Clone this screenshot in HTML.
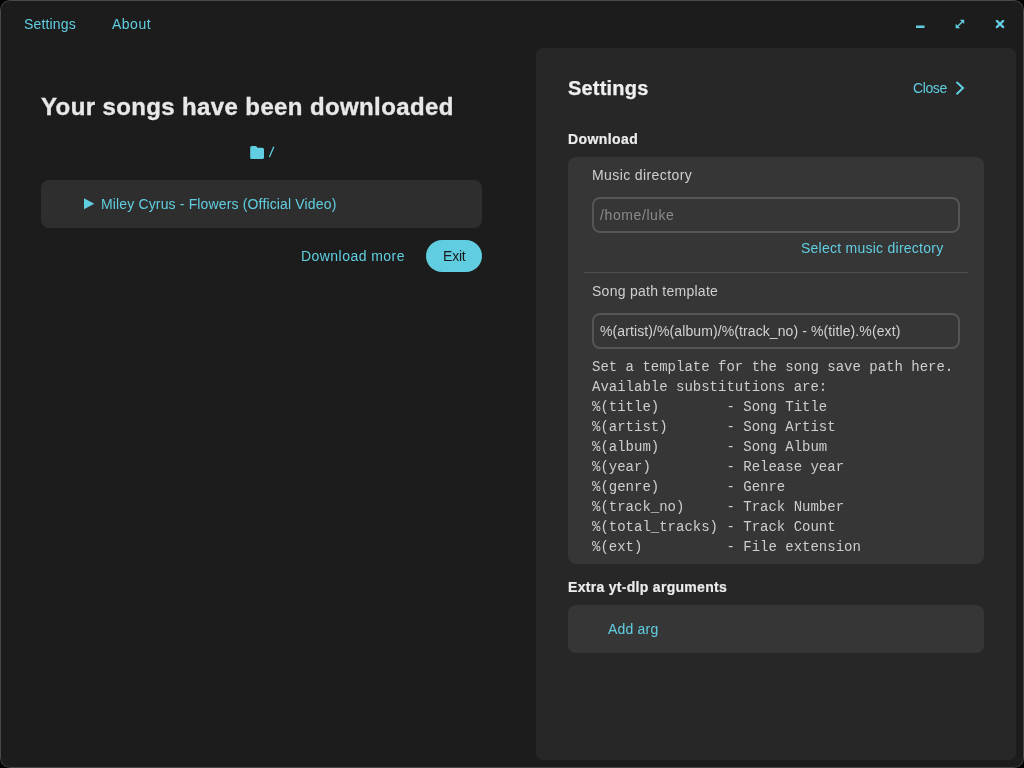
<!DOCTYPE html>
<html><head><meta charset="utf-8">
<style>
*{margin:0;padding:0;box-sizing:border-box}
html,body{width:1024px;height:768px;overflow:hidden;background:#000}
body{font-family:"Liberation Sans",sans-serif;position:relative}
.win{position:absolute;left:0;top:0;width:1024px;height:768px;background:#1c1c1c;border-radius:10px;overflow:hidden}
.frame{position:absolute;left:0;top:0;width:1024px;height:768px;border:1px solid #494949;border-radius:10px}
.t{position:absolute;white-space:pre;line-height:1;font-size:14px;will-change:transform}
.acc{color:#60cee0}
.panel{position:absolute;left:536px;top:48px;width:480px;height:712px;background:#272727;border-radius:7px}
.box{position:absolute;background:#363636;border-radius:8px}
.inp{position:absolute;border:2px solid #555555;border-radius:8px}
.mono{position:absolute;font-family:"Liberation Mono",monospace;font-size:14px;line-height:20px;white-space:pre;color:#cdcdcd;will-change:transform}
svg{position:absolute;overflow:visible}
</style></head><body>
<div class="win">
  <div class="t acc" style="left:24px;top:17px;letter-spacing:0.15px">Settings</div>
  <div class="t acc" style="left:112px;top:17px;letter-spacing:0.5px">About</div>
  <!-- window controls -->
  <svg style="left:0;top:0" width="1024" height="48">
    <rect x="916" y="25.5" width="8.5" height="2.5" fill="#60cee0"/>
    <defs><clipPath id="xc"><rect x="995.8" y="19.9" width="8.4" height="8.3"/></clipPath></defs>
    <line x1="957" y1="27" x2="963" y2="21" stroke="#60cee0" stroke-width="1.5"/>
    <polygon points="955.7,28.2 955.7,23.8 960.1,28.2" fill="#60cee0"/>
    <polygon points="964.2,19.7 964.2,24.1 959.8,19.7" fill="#60cee0"/>
    <g stroke="#60cee0" stroke-width="2.3" clip-path="url(#xc)"><line x1="994" y1="18" x2="1006" y2="30"/><line x1="1006" y1="18" x2="994" y2="30"/></g>
  </svg>

  <div class="t" style="left:41px;top:95px;font-size:24px;font-weight:bold;color:#e8e8e8;letter-spacing:0.38px;-webkit-text-stroke:0.35px #e8e8e8">Your songs have been downloaded</div>


  <div class="box" style="left:41px;top:180px;width:441px;height:48px;background:#2e2e2e"></div>
  <svg style="left:0;top:0" width="540" height="300">
    <path d="M250.2 147.6 Q250.2 146 251.8 146 L255.4 146 Q256.2 146 256.8 146.7 L257.6 147.7 L262.4 147.7 Q264 147.7 264 149.3 L264 157.4 Q264 159 262.4 159 L251.8 159 Q250.2 159 250.2 157.4 Z" fill="#60cee0"/>
    <line x1="269.6" y1="156.6" x2="273.6" y2="147.2" stroke="#60cee0" stroke-width="1.3" stroke-linecap="round"/>
    <polygon points="84,198.3 84,209.3 94.3,203.8" fill="#60cee0"/>
  </svg>
  <div class="t acc" style="left:100.5px;top:197px;letter-spacing:0.15px">Miley Cyrus - Flowers (Official Video)</div>

  <div class="t acc" style="left:301px;top:249px;letter-spacing:0.45px">Download more</div>
  <div style="position:absolute;left:426px;top:240px;width:56px;height:32px;border-radius:16px;background:#60cee0"></div>
  <div class="t" style="left:443px;top:249px;color:#1a1a1a;letter-spacing:-0.2px">Exit</div>

  <div class="panel"></div>
  <div class="t" style="left:568px;top:78px;font-size:20px;font-weight:bold;color:#f0f0f0;letter-spacing:0.2px;-webkit-text-stroke:0.25px #f0f0f0">Settings</div>
  <div class="t acc" style="left:913px;top:81px;letter-spacing:-0.4px">Close</div>
  <svg style="left:0;top:0" width="1024" height="120">
    <polyline points="956.5,82 963,88 956.5,94.2" stroke="#60cee0" stroke-width="2" fill="none"/>
  </svg>

  <div class="t" style="left:568px;top:132px;font-weight:bold;color:#ececec;letter-spacing:0.4px;-webkit-text-stroke:0.2px #ececec">Download</div>
  <div class="box" style="left:568px;top:157px;width:416px;height:407px"></div>
  <div class="t" style="left:592px;top:168px;color:#cfcfcf;letter-spacing:0.4px">Music directory</div>
  <div class="inp" style="left:592px;top:197px;width:368px;height:36px"></div>
  <div class="t" style="left:600px;top:208px;color:#8a8a8a;letter-spacing:0.6px">/home/luke</div>
  <div class="t acc" style="left:801px;top:241px;letter-spacing:0.25px">Select music directory</div>
  <div style="position:absolute;left:584px;top:272px;width:384px;height:1px;background:#4f4f4f"></div>
  <div class="t" style="left:592px;top:284px;color:#cfcfcf;letter-spacing:0.26px">Song path template</div>
  <div class="inp" style="left:592px;top:313px;width:368px;height:36px"></div>
  <div class="t" style="left:600px;top:324px;color:#d2d2d2;letter-spacing:0.1px">%(artist)/%(album)/%(track_no) - %(title).%(ext)</div>
  <div class="mono" style="left:592px;top:357px">Set a template for the song save path here.
Available substitutions are:
%(title)        - Song Title
%(artist)       - Song Artist
%(album)        - Song Album
%(year)         - Release year
%(genre)        - Genre
%(track_no)     - Track Number
%(total_tracks) - Track Count
%(ext)          - File extension</div>

  <div class="t" style="left:568px;top:580px;font-weight:bold;color:#ececec;letter-spacing:0.3px;-webkit-text-stroke:0.2px #ececec">Extra yt-dlp arguments</div>
  <div class="box" style="left:568px;top:605px;width:416px;height:48px"></div>
  <div class="t acc" style="left:608px;top:622px;letter-spacing:0.2px">Add arg</div>
  <div class="frame"></div>
</div>
</body></html>
